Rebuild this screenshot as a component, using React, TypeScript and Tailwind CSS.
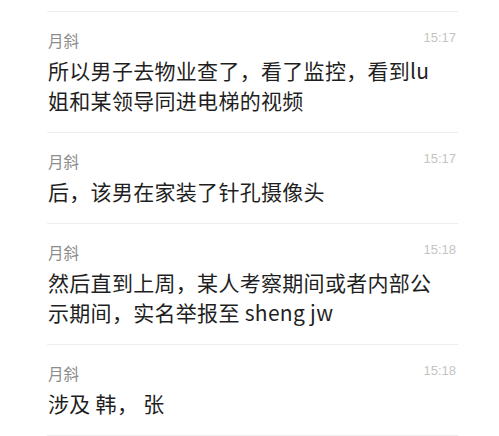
import React from "react";

type Msg = {
  name: string;
  time: string;
  lines: string[];
};

const messages: Msg[] = [
  {
    name: "月斜",
    time: "15:17",
    lines: ["所以男子去物业查了，看了监控，看到lu", "姐和某领导同进电梯的视频"],
  },
  { name: "月斜", time: "15:17", lines: ["后，该男在家装了针孔摄像头"] },
  {
    name: "月斜",
    time: "15:18",
    lines: ["然后直到上周，某人考察期间或者内部公", "示期间，实名举报至 sheng jw"],
  },
  { name: "月斜", time: "15:18", lines: ["涉及 韩， 张"] },
];

const font = { fontFamily: "'Noto Sans CJK SC', 'Noto Sans', sans-serif" };

const App = () => {
  return (
    <div className="w-[499px] h-[436px] bg-white overflow-hidden pt-[11px]" style={font}>
      <div className="ml-[47px] w-[411px] border-t border-[#ededed]">
        {messages.map((m, i) => (
          <div key={i} className="border-b border-[#ededed] pt-[18px] pb-[17px]">
            {/* name + time */}
            <div className="flex justify-between items-start h-[20px] mb-[5px]">
              <span className="text-[15.5px] leading-[20px] text-[#8c8c8c] pl-px">{m.name}</span>
              <span
                className="text-[13px] leading-[14px] text-[#c4c4c4] mr-[2px] mt-px"
                style={{ fontFamily: "'Liberation Sans', Arial, sans-serif" }}
              >
                {m.time}
              </span>
            </div>

            {/* message body */}
            <div className="text-[21px] leading-[30px] tracking-[0.3px] text-[#1f1f1f] pl-px">
              {m.lines.map((l, j) => (
                <div key={j} className="whitespace-pre">
                  {l}
                </div>
              ))}
            </div>
          </div>
        ))}
      </div>
    </div>
  );
};

export default App;
